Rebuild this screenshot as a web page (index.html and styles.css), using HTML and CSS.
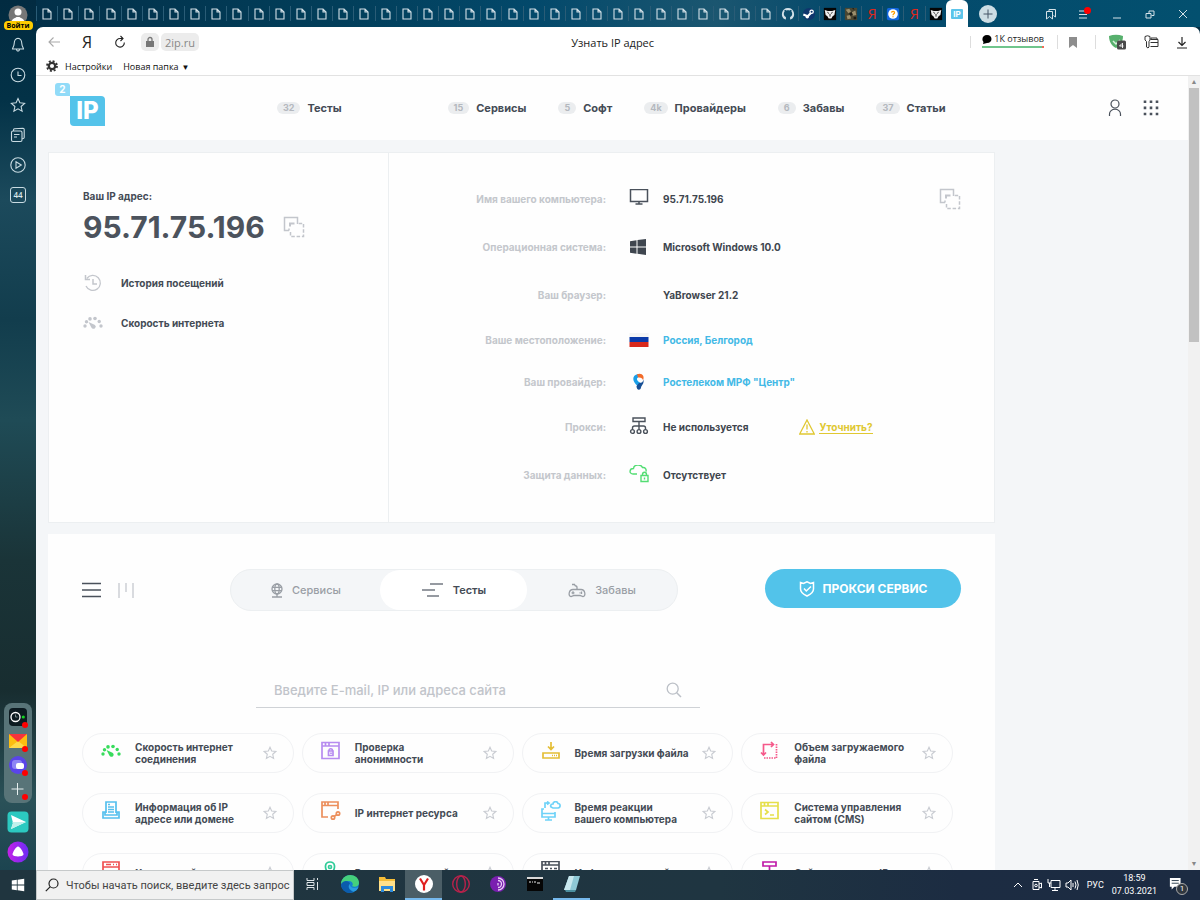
FILE: index.html
```html
<!DOCTYPE html>
<html lang="ru">
<head>
<meta charset="utf-8">
<title>Узнать IP адрес</title>
<link rel="stylesheet" href="styles.css">
</head>
<body>
<svg class="sprite" aria-hidden="true">
  <symbol id="doc" viewBox="0 0 10 12"><path d="M1 1h5l3 3v7H1zM6 1v3h3" fill="none" stroke="currentColor" stroke-width="1.1"/></symbol>
  <symbol id="github" viewBox="0 0 16 16"><path fill="currentColor" d="M8 1a7 7 0 0 0-3 13.300c.5.100.6-.2.600-.5v-2.300C4 10.800 3.200 9.500 3.200 7.500c0-1 .3-1.800.9-2.500-.2-.6-.2-1.400.1-2 .8 0 1.500.5 2 .9 1.200-.3 2.400-.3 3.600 0 .5-.4 1.200-.9 2-.9.3.600.3 1.400.1 2 .6.700.9 1.500.9 2.500 0 2-.8 3.300-2.400 4v2.300c0 .3.1.6.600.5A7 7 0 0 0 8 1z"/></symbol>
  <symbol id="steam" viewBox="0 0 16 16"><circle cx="8" cy="8" r="7" fill="#10356d"/><path d="M1.500 8.500l5 2 4-4" stroke="#fff" stroke-width="2.500" fill="none"/><circle cx="11" cy="5.500" r="2.600" fill="#fff"/><circle cx="11" cy="5.500" r="1.200" fill="#10356d"/><circle cx="6" cy="11" r="2" fill="#fff"/></symbol>
  <symbol id="wolf" viewBox="0 0 16 16"><path d="M1 1h14v14H1z" fill="#050505"/><path d="M2 3.500l3.500 1h5l3.500-1-1 5.500-2 1.500L9.500 13h-3L5 10.500 3 9z" fill="#eee"/><path d="M5 6l2 1.500M11 6L9 7.500M8 8v3" stroke="#111" stroke-width="1"/></symbol>
  <symbol id="camo" viewBox="0 0 16 16"><path d="M1 1h14v14H1z" fill="#4a4632"/><path d="M2 3l4-1 2 3-3 2zM9 6l4-2 1 5-4 1zM3 10l4-1 1 4-4 1z" fill="#9c8f6d"/><path d="M6 7l3-1 1 3-3 1zM11 11h3v3h-3zM9 2l2-1 1 2z" fill="#1c1b15"/></symbol>
  <symbol id="quest" viewBox="0 0 16 16"><rect x="1" y="1" width="14" height="14" rx="2" fill="#1266dd"/><circle cx="8" cy="8" r="5.500" fill="#fff"/><path d="M6.300 6.500C6.500 4.500 10 4.600 9.700 6.600 9.500 7.700 8 7.700 8 9.300M8 10.500v1.300" fill="none" stroke="#ff9d00" stroke-width="1.500"/></symbol>
  <symbol id="copy" viewBox="0 0 22 22"><path d="M6 14.500H1.500V1.500h13V6" fill="none" stroke="currentColor" stroke-width="1.500"/><path d="M7 10.500V7.500h4.500" fill="none" stroke="currentColor" stroke-width="2"/><path d="M14.500 6v2M6 14.500v-2" fill="none" stroke="currentColor" stroke-width="1.500"/><path d="M7.500 16v4.500h13v-13H15" fill="none" stroke="currentColor" stroke-width="1.500" stroke-dasharray="3.500 1.800"/></symbol>
  <symbol id="gauge" viewBox="0 0 20 14"><g fill="currentColor"><circle cx="2" cy="10" r="1.700"/><circle cx="3.500" cy="5.800" r="1.700"/><circle cx="7" cy="2.900" r="1.800"/><circle cx="12" cy="2.500" r="1.800"/><circle cx="16.200" cy="5.500" r="1.700"/><circle cx="18" cy="10" r="1.700"/><path d="M5.500 6l6 2.700a2.200 2.200 0 1 1-3 3z"/></g></symbol>
  <symbol id="star" viewBox="0 0 16 16"><path d="M8 1.500l1.900 4.300 4.700.5-3.500 3.200 1 4.700L8 11.800l-4.100 2.400 1-4.700L1.400 6.300l4.700-.5z" fill="none" stroke="currentColor" stroke-width="1.300"/></symbol>
  <symbol id="win" viewBox="0 0 18 18"><path d="M1 3.300l6.500-1v6.200H1zM8.500 2.100L17 1v7.500H8.500zM1 9.500h6.500v6.200l-6.500-1zM8.500 9.500H17V17l-8.500-1.200z" fill="currentColor"/></symbol>
</svg>

<div class="desktop">
  <div class="browser">
    <aside class="side">
      <button class="login" aria-label="Профиль">
        <svg width="20" height="20" viewBox="0 0 20 20"><circle cx="10" cy="10" r="9.500" fill="#777"/><circle cx="10" cy="7" r="3.500" fill="#fff"/><path d="M3.500 17c.5-4 4.500-4 5-5h3c.5 1 4.500 1 5 5z" fill="#fff"/></svg>
        <span class="login-text">Войти</span>
      </button>
      <button class="side-btn" aria-label="Уведомления"><svg viewBox="0 0 16 16"><path d="M8 1.200C5 1.500 4.300 4 4.200 6.500 4.100 9.500 2.500 10.500 2.500 12h11c0-1.500-1.600-2.500-1.700-5.500C11.700 4 11 1.500 8 1.200zM6.500 12.500c.2 2.200 2.800 2.200 3 0"/></svg></button>
      <button class="side-btn" aria-label="История"><svg viewBox="0 0 16 16"><circle cx="8" cy="8" r="6.800"/><path d="M8 4.500V8.500h3.500"/></svg></button>
      <button class="side-btn" aria-label="Избранное"><svg viewBox="0 0 16 16"><path d="M8 1.500l1.900 4.300 4.700.5-3.500 3.200 1 4.700L8 11.800l-4.100 2.400 1-4.700L1.400 6.300l4.700-.5z"/></svg></button>
      <button class="side-btn" aria-label="Коллекции"><svg viewBox="0 0 16 16"><rect x="1.500" y="4" width="10.500" height="10.500" rx="1.500"/><path d="M3.500 4V3q0-1 1-1.200L13 1.200q1.200 0 1.200 1.200v8q0 1.200-2 1.200M4 7.500h5.500M4 10h3"/></svg></button>
      <button class="side-btn" aria-label="Видео"><svg viewBox="0 0 16 16"><circle cx="8" cy="8" r="7.200"/><path d="M6 4.800v6.400L11.300 8z"/></svg></button>
      <button class="side-btn count">44</button>
      <div class="side-dock">
        <button class="dock-btn" aria-label="Эфир"><svg viewBox="0 0 18 18"><rect width="18" height="18" rx="4" fill="#0c1a20"/><circle cx="6.500" cy="9" r="4.500" fill="none" stroke="#fff" stroke-width="1.300"/><path d="M6.500 6.500v2.500h2" stroke="#788" fill="none"/><circle cx="14.300" cy="9" r="1.600" fill="#12d822"/></svg></button>
        <button class="dock-btn" aria-label="Почта"><svg viewBox="0 0 18 18"><path d="M0 2h18v14H0z" fill="#fdbd10"/><path d="M0 16l9-7 9 7z" fill="#ffd94a"/><path d="M0 2h18l-9 8z" fill="#f5333c"/></svg></button>
        <button class="dock-btn" aria-label="Мессенджер"><svg viewBox="0 0 18 18"><circle cx="9" cy="9" r="9" fill="#5a45e8"/><rect x="3" y="4" width="10" height="9" rx="3" fill="#8f85f5"/><rect x="7" y="7" width="8" height="6" rx="2" fill="#fff"/></svg></button>
        <button class="dock-btn" aria-label="Добавить"><svg viewBox="0 0 18 18"><path d="M8.500 3v12M2.500 9h12" stroke="#e6efef" stroke-width="1"/></svg></button>
      </div>
      <button class="side-app" aria-label="Отправить"><svg viewBox="0 0 22 22"><rect x="0.500" y="0.500" width="21" height="21" rx="4" fill="#2cc9c0"/><path d="M4 4l15 7-15 7 2-6z" fill="#fff"/><path d="M5 11h14L4 18l2-6z" fill="#bff0ec"/></svg></button>
      <button class="side-app" aria-label="Алиса"><svg viewBox="0 0 22 22"><defs><linearGradient id="alice" x2="1" y2="0"><stop stop-color="#c322e6"/><stop offset="1" stop-color="#6b2cf5"/></linearGradient></defs><circle cx="11" cy="11" r="10.500" fill="url(#alice)"/><path d="M11 5.500c2 0 5.500 6 5.500 8 0 2.600-11 2.600-11 0 0-2 3.500-8 5.500-8z" fill="#fff"/></svg></button>
    </aside>

    <div class="frame">
      <div class="tabbar">
        <div class="tabs" id="tabs"></div>
        <button class="tab-active"><span class="ip-mini">IP</span></button>
        <div class="window-tools">
          <button class="new-tab" aria-label="Новая вкладка"><svg width="18" height="18" viewBox="0 0 18 18"><circle cx="9" cy="9" r="9" fill="#cddde4"/><path d="M9 4.500v9M4.500 9h9" stroke="#456"/></svg></button>
          <div class="window-buttons">
            <button aria-label="Закладки"><svg viewBox="0 0 12 12"><path d="M4 3.500v-2h6.500V9L8.500 7.500M1.500 3.500h6V11L4.500 8.500 1.500 11z"/></svg></button>
            <button aria-label="Меню" class="has-dot"><svg viewBox="0 0 12 12"><path d="M1 3h6M1 6.500h8M1 10h8"/></svg></button>
            <button aria-label="Свернуть"><svg viewBox="0 0 12 12"><path d="M2 10h8"/></svg></button>
            <button aria-label="Окно"><svg viewBox="0 0 12 12"><path d="M2 5.500h5V10H2zM5 5V3h5v4.500H7.500"/></svg></button>
            <button aria-label="Закрыть"><svg viewBox="0 0 12 12"><path d="M2 2l8 8M10 2l-8 8"/></svg></button>
          </div>
        </div>
      </div>

      <div class="window">
        <div class="toolbar">
          <div class="nav-buttons">
            <button aria-label="Назад"><svg class="pale" viewBox="0 0 14 14"><path d="M13 7H2M6.500 2.500L2 7l4.500 4.500"/></svg></button>
            <button class="ya">Я</button>
            <button aria-label="Обновить"><svg viewBox="0 0 14 14"><path d="M11.300 7.500A4.300 4.300 0 1 1 7 3.500h3M7.500 1L10 3.500 7.500 6"/></svg></button>
          </div>
          <div class="address">
            <span class="lock"><svg width="10" height="12" viewBox="0 0 10 12"><path d="M1 5h8v6H1z" fill="#777"/><path d="M3 5V3.500a2 2 0 0 1 4 0V5" fill="none" stroke="#777" stroke-width="1.300"/></svg></span>
            <span class="host">2ip.ru</span>
          </div>
          <div class="page-title">Узнать IP адрес</div>
          <div class="toolbar-right">
            <a class="reviews" href="#"><svg width="10" height="9" viewBox="0 0 10 9"><path d="M5 0c6 0 6 8 0 8L1 9l.5-2C-1 4 1 0 5 0z" fill="#000"/></svg>1К отзывов</a>
            <button class="mark" aria-label="В закладки"><svg width="8" height="11" viewBox="0 0 8 11"><path d="M0 0h8v11L4 8l-4 3z" fill="#8d8d8d"/></svg></button>
            <button aria-label="Защита"><svg width="18" height="16" viewBox="0 0 18 16"><path d="M1 2q7-2.500 14 0c0 6-3 10-7 12C4 12 1 8 1 2z" fill="#57b06d"/><path d="M5 7l3 3 4-4" stroke="#d8f0dd" fill="none" stroke-width="1.500"/><rect x="9" y="6.500" width="9" height="9" rx="1.500" fill="#4a4a4a"/><path d="M14.500 9v5M14 9.500L11.500 12H15.500" stroke="#fff" stroke-width=".9" fill="none"/></svg></button>
            <button aria-label="Пароли"><svg width="15" height="14" viewBox="0 0 15 14"><path d="M1 1.500Q3.500 0 6 1.500V5L5 6.500V12L4 13 2.500 12V6.500L1 5zM7 4.500V3h6v1.500M6.500 4.500H14V11.500H6.500M6.500 7.500H14" fill="none" stroke="#333"/></svg></button>
            <button aria-label="Загрузки"><svg width="10" height="13" viewBox="0 0 10 13"><path d="M5 1v8.500M1.500 6L5 9.500 8.500 6M0 12h10" fill="none" stroke="#222" stroke-width="1.200"/></svg></button>
          </div>
        </div>
        <div class="bookmarks">
          <a href="#"><svg width="12" height="12" viewBox="0 0 12 12"><circle cx="6" cy="6" r="3.200" fill="none" stroke="#333" stroke-width="2.300"/><circle cx="6" cy="6" r="5" fill="none" stroke="#333" stroke-width="1.800" stroke-dasharray="2 1.930"/></svg>Настройки</a>
          <a href="#">Новая папка <span class="caret">▼</span></a>
        </div>

        <div class="viewport">
          <div class="page">
            <header class="site-header">
              <a class="logo" href="#" aria-label="2IP"><span class="logo-two">2</span><span class="logo-ip">IP</span></a>
              <nav class="site-nav">
                <a href="#"><span class="pill">32</span>Тесты</a>
                <a href="#"><span class="pill">15</span>Сервисы</a>
                <a href="#"><span class="pill">5</span>Софт</a>
                <a href="#"><span class="pill">4k</span>Провайдеры</a>
                <a href="#"><span class="pill">6</span>Забавы</a>
                <a href="#"><span class="pill">37</span>Статьи</a>
              </nav>
              <div class="header-actions">
                <button aria-label="Войти"><svg width="14" height="18" viewBox="0 0 14 18"><circle cx="7" cy="5" r="4"/><path d="M1.500 17v-2a5.500 4.800 0 0 1 11 0v2"/></svg></button>
                <button aria-label="Разделы"><svg class="dots" width="16" height="16" viewBox="0 0 16 16"><path d="M2 .5v15M8 .5v15M14 .5v15"/></svg></button>
              </div>
            </header>

            <main class="content">
              <section class="ip-card">
                <div class="ip-left">
                  <p class="ip-label">Ваш IP адрес:</p>
                  <div class="ip-row"><span class="ip-value">95.71.75.196</span><button class="copy" aria-label="Копировать"><svg><use href="#copy"/></svg></button></div>
                  <a class="ip-link" href="#"><svg viewBox="0 0 20 20"><path d="M3.800 5.500A7.500 7.500 0 1 1 3 13" fill="none" stroke="currentColor" stroke-width="1.300"/><path d="M2.500 2v4.500H7M10 6v5h4" fill="none" stroke="currentColor" stroke-width="1.500"/></svg>История посещений</a>
                  <a class="ip-link" href="#"><svg><use href="#gauge"/></svg>Скорость интернета</a>
                </div>
                <div class="ip-right">
                  <dl class="facts">
                    <div class="fact"><dt>Имя вашего компьютера:</dt><dd><svg viewBox="0 0 20 20"><path d="M1.500.500h17v12h-17zM10 13v2M6.500 15h7" fill="none" stroke="#4a515b" stroke-width="1.500"/></svg>95.71.75.196</dd></div>
                    <div class="fact"><dt>Операционная система:</dt><dd><svg class="dark"><use href="#win"/></svg>Microsoft Windows 10.0</dd></div>
                    <div class="fact"><dt>Ваш браузер:</dt><dd><span></span>YaBrowser 21.2</dd></div>
                    <div class="fact short"><dt>Ваше местоположение:</dt><dd><svg viewBox="0 0 20 20"><path d="M.5 3h19v5H.5z" fill="#f5f5f5"/><path d="M.5 7h19v5H.5z" fill="#0b3aa8"/><path d="M.5 12h19v5H.5z" fill="#d8291c"/></svg><a href="#">Россия, Белгород</a></dd></div>
                    <div class="fact short"><dt>Ваш провайдер:</dt><dd><svg viewBox="0 0 20 20"><path d="M9 14C3 10 2.500 3 9 2v3.500C7 6.500 8 9 11 10.500L13 13l-3 3z" fill="#1a9fe8"/><path d="M8 2.200c5-2 8 2 6 6-.5-2-2-3-5-2.700z" fill="#f26b2a"/><path d="M10 11c3 0 4-1 4.500-3.500.5 4-1 5-2 6.500l-1 3c-2 2-4 0-4-3z" fill="#174f95"/></svg><a href="#">Ростелеком МРФ "Центр"</a></dd></div>
                    <div class="fact"><dt>Прокси:</dt><dd><svg viewBox="0 0 20 20"><g fill="none" stroke="#4a515b" stroke-width="1.400"><path d="M4 1h12v3.500H4zM10 4.500v8M3.500 12.500V11q0-2 2-2h9q2 0 2 2v1.500"/><circle cx="3.500" cy="14.500" r="1.900"/><circle cx="10" cy="14.500" r="1.900"/><circle cx="16.500" cy="14.500" r="1.900"/></g></svg>Не используется<a class="warn" href="#"><svg viewBox="0 0 16 16"><path d="M8 1L15.300 15H.7zM8 5.500v5M8 12v1.500" fill="none" stroke="currentColor" stroke-width="1.300"/></svg><span>Уточнить?</span></a></dd></div>
                    <div class="fact"><dt>Защита данных:</dt><dd><svg viewBox="0 0 20 20"><g fill="none" stroke="#53dd73" stroke-width="1.400"><path d="M8 9H4C0 9 0 3.500 4.500 3.500 5-1 12-1 13.500 2.500c3-.5 4 2 3.500 4M13.500 10.500V9.500c0-3 4-3 4 0v1M12 10.500h7v6h-7zM15.500 12.500v2"/></g></svg>Отсутствует</dd></div>
                  </dl>
                  <button class="copy" aria-label="Копировать"><svg><use href="#copy"/></svg></button>
                </div>
              </section>

              <section class="tools">
                <div class="tools-top">
                  <div class="view-modes">
                    <button aria-label="Список"><svg width="20" height="16" viewBox="0 0 20 16"><path d="M0 1.500h19M0 8h19M0 14.500h19" stroke="#4a515b" stroke-width="1.500"/></svg></button>
                    <button aria-label="Колонки"><svg width="16" height="16" viewBox="0 0 16 16"><path d="M1 1v15M8 1v9M15 1v15" stroke="#c5c8ce" stroke-width="1.300"/></svg></button>
                  </div>
                  <div class="segments">
                    <button><svg width="12" height="15" viewBox="0 0 12 15"><g fill="none" stroke="currentColor" stroke-width="1.300"><circle cx="6" cy="6" r="5"/><ellipse cx="6" cy="6" rx="2.200" ry="5"/><path d="M1 4.300h10M1 7.700h10M6 11v3M1 14h10"/></g></svg>Сервисы</button>
                    <button class="on"><svg width="22" height="16" viewBox="0 0 22 16"><path d="M8 2h13M0 8h13M5 14h12" stroke="#747a82" stroke-width="1.600"/></svg>Тесты</button>
                    <button><svg width="18" height="15" viewBox="0 0 18 15"><g fill="none" stroke="currentColor" stroke-width="1.300"><path d="M9 7V4.500Q9 3 8 3T6.500 1.500H4M5 6.500h8c4.500 0 5 7 2 7-1.500 0-1.500-1-3-1H6c-1.500 0-1.500 1-3 1-3 0-2.500-7 2-7zM5 8.300v3M3.500 9.800h3M11.500 9.800h1M13.500 8.500v2.500"/></g></svg>Забавы</button>
                  </div>
                  <button class="proxy"><svg width="16" height="16" viewBox="0 0 16 16"><path d="M1.500 1.500l3 1L8 .8l3.500 1.700 3-1V8c0 4-3.500 5.500-6.500 7C5 13.500 1.500 12 1.500 8zM5 7.500L7.300 10 12 5.500" fill="none" stroke="#fff" stroke-width="1.500"/></svg>ПРОКСИ СЕРВИС</button>
                </div>
                <form class="search">
                  <input type="search" placeholder="Введите E-mail, IP или адреса сайта" aria-label="Введите E-mail, IP или адреса сайта">
                  <button type="button" aria-label="Найти"><svg width="16" height="16" viewBox="0 0 16 16"><circle cx="6.700" cy="6.700" r="5.500" fill="none" stroke="#bcc0c7" stroke-width="1.300"/><path d="M10.700 10.700L15 15" stroke="#bcc0c7" stroke-width="1.500"/></svg></button>
                </form>
                <div class="grid">
                  <a class="tool c-green" href="#"><svg viewBox="0 0 20 14"><use href="#gauge"/></svg><span>Скорость интернет<br>соединения</span><svg class="fav"><use href="#star"/></svg></a>
                  <a class="tool c-purple" href="#"><svg viewBox="0 0 20 20"><path d="M1 1.500h17v16H1zM1 5h17M4.500 1.500V5M8 1.500V5M7.500 10h4.500v4.500H7.500zM8 10c0-3 3.500-3 3.500 0M10 11.500v1.500"/></svg><span>Проверка<br>анонимности</span><svg class="fav"><use href="#star"/></svg></a>
                  <a class="tool c-gold" href="#"><svg viewBox="0 0 20 20"><path d="M10 1v7M7 5.500l3 3 3-3M2 12h16v5H2zM11 14.500h1M13 14.500h1M15 14.500h1"/></svg><span>Время загрузки файла</span><svg class="fav"><use href="#star"/></svg></a>
                  <a class="tool c-pink" href="#"><svg viewBox="0 0 20 20"><path d="M3.500 14V3.500H13M1 11.500l2.500 2.500L6 11.500M11 1l2.500 2.500L11 6"/><path d="M16.500 3v14H3" stroke-dasharray="1.500 1"/></svg><span>Объем загружаемого<br>файла</span><svg class="fav"><use href="#star"/></svg></a>
                  <a class="tool c-blue" href="#"><svg viewBox="0 0 20 20"><path d="M5 12V1h10v11M7 3.500h2M7 6h6M7 8.500h6M7 11h6M2 11h2v3h12v-3h2v6H2z"/></svg><span>Информация об IP<br>адресе или домене</span><svg class="fav"><use href="#star"/></svg></a>
                  <a class="tool c-orange" href="#"><svg viewBox="0 0 20 20"><path d="M7 16H1V1h16v7M1 4.500h16M4 1v3M7 1v3M13 15.500l3-2"/><circle cx="12" cy="16.500" r="1.700"/><circle cx="17" cy="12.500" r="1.700"/></svg><span>IP интернет ресурса</span><svg class="fav"><use href="#star"/></svg></a>
                  <a class="tool c-sky" href="#"><svg viewBox="0 0 20 20"><path d="M3 8H1v8h13v-5M1 12.500h13M7.500 16v3M4 19h7M4 7V2h4M6 .5L8 2 6 3.500M12 7h5c3-.5 2.500-4.500 0-4.500-1-3-5-2-5 .5-3 0-3 3-1 3.500z"/></svg><span>Время реакции<br>вашего компьютера</span><svg class="fav"><use href="#star"/></svg></a>
                  <a class="tool c-lime" href="#"><svg viewBox="0 0 20 20"><path d="M1 1.500h17v16H1zM1 5h17M4.500 1.500V5M8 1.500V5M5 8.500L8 11l-3 2.500M10 14h4"/></svg><span>Система управления<br>сайтом (CMS)</span><svg class="fav"><use href="#star"/></svg></a>
                  <a class="tool c-red" href="#"><svg viewBox="0 0 20 20"><path d="M2 1h16v5H2zM2 6v5h16V6M2 11v5h16v-5M5 3.500h5M12 3.500h1M15 3.500h1"/></svg><span>Хостинг сайта</span><svg class="fav"><use href="#star"/></svg></a>
                  <a class="tool c-teal" href="#"><svg viewBox="0 0 20 20"><path d="M9 14C2 7 4 1 9 1s7 6 0 13zM2 15h4l3 3 3-3h5"/><circle cx="9" cy="6" r="1.500"/></svg><span>Расстояние до сайта</span><svg class="fav"><use href="#star"/></svg></a>
                  <a class="tool c-dark" href="#"><svg viewBox="0 0 20 20"><path d="M1 .5h17v16H1zM1 4h17M4.500.5V4M8 .5V4M4 7.500h3M9 7.500h2M13 7.500h3M4 11h11"/></svg><span>Информация о сайте</span><svg class="fav"><use href="#star"/></svg></a>
                  <a class="tool c-magenta" href="#"><svg viewBox="0 0 20 20"><path d="M3 1h13v4H3zM9.500 5v8M3 15v-5h13v5"/></svg><span>Сайты на одном IP</span><svg class="fav"><use href="#star"/></svg></a>
                </div>
              </section>
            </main>
          </div>
          <div class="scrollbar" aria-hidden="true"><span>▲</span><i></i><span>▼</span></div>
        </div>
      </div>
    </div>
  </div>

  <footer class="taskbar">
    <button class="start" aria-label="Пуск"><svg width="14" height="14"><use href="#win"/></svg></button>
    <label class="task-search"><svg width="14" height="14" viewBox="0 0 14 14"><circle cx="8.500" cy="5.500" r="4.500" fill="none" stroke="#222" stroke-width="1.200"/><path d="M5.300 8.700L.8 13.200" stroke="#222" stroke-width="1.200"/></svg><input type="text" placeholder="Чтобы начать поиск, введите здесь запрос" aria-label="Поиск"></label>
    <div class="task-apps">
      <button aria-label="Задачи"><svg viewBox="0 0 20 20"><path d="M4 4v2.500h7V4M4 16v-2.500h7V16M4 8.500h7v3H4zM14.500 4v2M14.500 8v8" fill="none" stroke="#dfe5e8"/></svg></button>
      <button aria-label="Edge"><svg viewBox="0 0 20 20"><circle cx="10" cy="10" r="9" fill="#1580d0"/><path d="M2 6C6-2 19 0 19 9c0 3-4 5-7 3 2-2 0-5-3-5C5 7 3 9 1 11c0-2 0-3 1-5z" fill="#45d07c"/><path d="M1 10c3-5 9-3 9 0-3 2-1 6 3 8C7 21 1 16 1 10z" fill="#0b5cad"/><path d="M10 10c-.5 4 5 5 8.500 3-1 3-3 4-5 4.500-4-1.500-6-4.500-3.500-7.500z" fill="#2b9be0"/></svg></button>
      <button aria-label="Проводник"><svg viewBox="0 0 20 20"><path d="M2 3h6l1 2h9v12H2z" fill="#f5bd38"/><path d="M2 7h16v10H2z" fill="#ffe08a"/><path d="M4 12h12v6h-3v-3H7v3H4z" fill="#2d8bdc"/></svg></button>
      <button class="current" aria-label="Яндекс"><svg viewBox="0 0 20 20"><circle cx="10" cy="10" r="9" fill="#fff"/><path d="M6 4.500l4 6.500 4-6.500M10 10v6.500" fill="none" stroke="#e02020" stroke-width="2.200"/></svg></button>
      <button aria-label="Opera"><svg viewBox="0 0 20 20"><circle cx="10" cy="10" r="8.300" fill="none" stroke="#b8224b" stroke-width="1.400"/><ellipse cx="10" cy="10" rx="4.300" ry="8" fill="none" stroke="#b8224b" stroke-width="1.400"/></svg></button>
      <button aria-label="Tor"><svg viewBox="0 0 20 20"><circle cx="10" cy="10" r="8" fill="#7a1fb0"/><path d="M10 4a6 6 0 0 1 0 12M10 6.500a3.500 3.500 0 0 1 0 7M10 9v2.500" fill="none" stroke="#e8cff5" stroke-width="1.300"/></svg></button>
      <button aria-label="Консоль"><svg viewBox="0 0 20 20"><path d="M2 3h16v14H2z" fill="#050505"/><path d="M2 3h16v2H2z" fill="#d8d8d8"/><path d="M4 8h2M7 8h1M9 8h2M12 9h3" stroke="#eee"/></svg></button>
      <button class="open" aria-label="Блокнот"><svg viewBox="0 0 20 20"><path d="M7 2h11l-4 14H2z" fill="#8fc9d6"/><path d="M7 2h5L8 16H2z" fill="#c9e8ee"/><path d="M3 16l11 0-1 2H4z" fill="#4c8fa0"/></svg></button>
    </div>
    <div class="tray">
      <button aria-label="Скрытые значки"><svg viewBox="0 0 14 14"><path d="M3 9l4-4 4 4"/></svg></button>
      <button aria-label="Камера"><svg viewBox="0 0 14 14"><path d="M4 3.500h6v8H4zM5 1.500h4M10 6l2.500-1v5L10 9"/><circle cx="7" cy="7.500" r="1.300"/></svg></button>
      <button aria-label="Сеть"><svg viewBox="0 0 14 14"><path d="M4 2.500h9v7H4zM8 9.500v3M5 12.500h6M1 1v4h3M2.500 5v4"/></svg></button>
      <button aria-label="Звук"><svg viewBox="0 0 14 14"><path d="M1 5h2l3-3v10L3 9H1zM8 5v4M10 3.500q2 3.500 0 7M12 2q2.500 5 0 10"/></svg></button>
      <span class="lang">РУС</span>
      <time class="clock"><span>18:59</span><span>07.03.2021</span></time>
      <button class="notes" aria-label="Уведомления"><svg viewBox="0 0 18 18"><path d="M1 1h12v10H6l-3 3v-3H1z" fill="#fff"/><path d="M3 4h8M3 7h8" stroke="#1d3040"/></svg><span>1</span></button>
    </div>
  </footer>
</div>
<script src="app.js"></script>
</body>
</html>
```
FILE: styles.css
```css
* { box-sizing: border-box; }
body { margin: 0; font-family: "Open Sans", "Noto Sans", sans-serif; font-size: 11px; color: #222; }
button { border: 0; padding: 0; background: none; color: inherit; font: inherit; display: flex; align-items: center; justify-content: center; }
a { color: inherit; text-decoration: none; }
p, dl, dd { margin: 0; }
input { border: 0; padding: 0; background: none; outline: 0; font: inherit; min-width: 0; }
svg { flex: none; display: block; }
.sprite { position: absolute; width: 0; height: 0; }

.desktop { height: 100vh; display: flex; flex-direction: column; overflow: hidden; }
.browser { flex: 1; min-height: 0; display: flex; background: linear-gradient(180deg, #022b41 0, #033247 100px, #1c4a5c 200px, #123d4d 320px, #1f4b56 420px, #1a3438 560px, #182d30 690px, #2a5158 800px, #1c4450 870px); }

/* Sidebar */
.side { width: 36px; flex: none; display: flex; flex-direction: column; align-items: center; padding: 4px 0 7px; }
.login { flex-direction: column; height: 26px; }
.login-text { background: #ffcc00; color: #000; font-size: 7px; line-height: 9px; font-weight: 700; border-radius: 4px; padding: 0 3px; margin-top: -4px; z-index: 1; }
.side-btn { width: 30px; height: 30px; }
.side-btn svg { width: 16px; height: 16px; fill: none; stroke: #c9dbe2; stroke-width: 1.1; }
.count { width: 16px; height: 16px; margin: 7px 0; border: 1px solid #c9dbe2; border-radius: 3px; color: #dbe8ec; font-size: 8px; line-height: 14px; font-weight: 600; }
.side-dock { margin-top: auto; width: 28px; height: 100px; padding: 2px 0; border-radius: 8px; background: #587478; display: flex; flex-direction: column; align-items: center; }
.dock-btn { position: relative; width: 18px; height: 24px; }
.dock-btn svg { width: 18px; height: 18px; }
.dock-btn::after { content: ""; position: absolute; right: -1px; bottom: 1px; width: 6px; height: 6px; border-radius: 50%; background: #f00; }
.side-app { margin-top: 8px; height: 22px; }
.side-app svg { width: 22px; height: 22px; }

/* Tabs */
.frame { flex: 1; min-width: 0; display: flex; flex-direction: column; }
.tabbar { height: 27px; display: flex; background: linear-gradient(90deg, #023049, #023e5a 300px, #03496b 500px, #1b5670 680px, #04496b 800px, #03506f); }
.tabs { flex: 1; min-width: 0; display: flex; align-items: center; }
.tab { flex: 1; min-width: 0; height: 15px; border-left: 1px solid #2a5c76; color: #d3e0e7; }
.tab svg { width: 14px; height: 14px; }
.tab .doc { width: 10px; height: 12px; }
.tab-ya { color: #e0281b; font-size: 14px; line-height: 14px; }
.tab-active { width: 22px; background: #fff; border-radius: 6px 6px 0 0; }
.ip-mini { background: #5cc4ea; color: #fff; font: 700 8px/10px Inter, sans-serif; padding: 0 2px; border-radius: 1px; }
.window-tools { width: 232px; display: flex; align-items: center; justify-content: space-between; padding: 0 11px; }
.window-buttons { display: flex; gap: 21px; }
.window-buttons button { position: relative; }
.window-buttons svg { width: 12px; height: 12px; fill: none; stroke: #d5e2e8; }
.has-dot::after { content: ""; position: absolute; right: -1px; top: -1px; width: 7px; height: 7px; border-radius: 50%; background: #f00; }

/* Toolbar */
.window { flex: 1; min-height: 0; display: flex; flex-direction: column; background: #fff; border-radius: 7px 7px 0 0; overflow: hidden; }
.toolbar { height: 30px; display: flex; align-items: center; padding: 0 13px 0 11px; }
.nav-buttons { display: flex; gap: 19px; width: 94px; }
.nav-buttons svg { width: 14px; height: 14px; fill: none; stroke: #222; stroke-width: 1.1; }
.nav-buttons .pale { stroke: #aaa; }
.ya { width: 14px; font-size: 16px; line-height: 18px; }
.address { display: flex; gap: 2px; }
.lock, .host { background: #ececec; border-radius: 5px; height: 18px; display: flex; align-items: center; }
.lock { width: 18px; justify-content: center; }
.host { padding: 0 4px; color: #888; font-size: 11px; }
.page-title { flex: 1; text-align: center; font-size: 11px; padding-left: 44px; }
.toolbar-right { display: flex; align-items: center; gap: 18px; }
.toolbar-right button { height: 14px; }
.reviews { position: relative; display: flex; align-items: center; gap: 2px; font-size: 10px; line-height: 12px; margin: 0 6px 6px 0; font-size: 9px; }
.reviews::before { content: ""; position: absolute; left: -12px; top: 3px; width: 1px; height: 12px; background: #ddd; }
.reviews::after { content: ""; position: absolute; left: 0; right: 0; bottom: -3px; height: 2px; background: linear-gradient(90deg, #70c58c 96%, #f26a55 96%); }
.toolbar-right .mark { width: 39px; padding-right: 8px; border: solid #ddd; border-width: 0 1px; margin-left: -11px; }
.toolbar-right .mark + button { margin-left: -6px; }
.bookmarks { height: 19px; border-bottom: 1px solid #e2e2e2; display: flex; align-items: center; gap: 11px; padding: 0 10px; font-size: 9px; color: #111; }
.bookmarks a { display: flex; align-items: center; gap: 7px; }
.bookmarks a + a { gap: 3px; }
.caret { font-size: 8px; }

/* Site */
.viewport { flex: 1; min-height: 0; display: flex; }
.page { flex: 1; min-width: 0; overflow: hidden; background: #f4f6f8; font-family: Inter, sans-serif; font-weight: 700; font-size: 10px; color: #444b55; }
.scrollbar { width: 12px; background: #f1f1f1; display: flex; flex-direction: column; align-items: center; padding: 0 1px; font-size: 7px; line-height: 12px; color: #888; }
.scrollbar i { width: 100%; height: 254px; background: #c1c1c1; margin-bottom: auto; }
.site-header { height: 64px; background: #fefefe; display: flex; align-items: center; padding: 0 29px 0 19px; }
.logo { width: 50px; height: 50px; display: flex; flex-direction: column; align-self: flex-start; padding-top: 7px; color: #fff; }
.logo-two { width: 15px; height: 13px; background: #91dbf8; border-radius: 3px 3px 0 3px; font-size: 10px; line-height: 13px; text-align: center; flex: none; }
.logo-ip { width: 35px; height: 30px; margin-left: 15px; background: #54c3ea; border-radius: 0 4px 0 4px; font-size: 24px; line-height: 30px; font-weight: 800; text-align: center; flex: none; }
.site-nav { flex: 1; display: flex; gap: 32px; margin-left: 172px; font-size: 11px; }
.site-nav a { display: flex; align-items: center; gap: 7px; }
.site-nav a:first-child { margin-right: 74px; }
.pill { background: #ebedef; color: #b4b8be; border-radius: 6px; font-size: 9px; line-height: 12px; padding: 0 6px; }
.header-actions { display: flex; gap: 21px; }
.header-actions svg { fill: none; stroke: #4a515b; stroke-width: 1.2; }
.header-actions .dots { stroke-width: 2.6; stroke-dasharray: 2.6 3.500; }

.content { width: 947px; max-width: 100%; margin: 12px 0 0 12px; display: flex; flex-direction: column; gap: 11px; }
.ip-card { display: flex; background: #fefefe; border: 1px solid #eceff1; }
.ip-left { flex: 0 0 340px; padding: 35px 34px; border-right: 1px solid #eceff1; }
.ip-label { line-height: 16px; }
.ip-row { display: flex; align-items: center; gap: 18px; height: 46px; margin-bottom: 13px; }
.ip-value { font-size: 30px; line-height: 36px; color: #4c535d; }
.copy { color: #c3c6cc; }
.copy svg { width: 22px; height: 22px; }
.ip-link { display: flex; align-items: center; gap: 18px; height: 40px; }
.ip-link svg { width: 20px; height: 20px; color: #c3c6cc; }
.ip-right { flex: 1; display: flex; align-items: flex-start; padding: 22px 33px 23px 0; }
.ip-right .copy { margin-top: 13px; }
.facts { flex: 1; }
.fact { display: grid; grid-template-columns: 217px 1fr; gap: 23px; align-items: center; height: 48px; }
.short { height: 42px; }
.fact dt { text-align: right; color: #c4c7cc; }
.fact dd { display: grid; grid-template-columns: 20px auto 1fr; column-gap: 14px; align-items: center; color: #3f464f; }
.fact dd > svg { width: 20px; height: 20px; }
.fact dd > .dark { width: 18px; height: 18px; }
.fact dd > a { color: #43b9e6; }
.fact dd > .warn { color: #e0c832; display: flex; align-items: center; gap: 4px; margin-left: 37px; }
.warn svg { width: 16px; height: 16px; }
.warn span { border-bottom: 1px solid; }

.tools { background: #fefefe; padding: 35px 34px 20px 34px; }
.tools-top { display: flex; align-items: flex-start; justify-content: space-between; }
.view-modes { display: flex; gap: 16px; height: 42px; width: 52px; }
.segments { flex: 0 1 448px; margin-left: 8px; height: 42px; border: 1px solid #eceff1; border-radius: 21px; background: #f4f6f8; display: grid; grid-template-columns: 149px 147px 149px; font-weight: 500; color: #999ea5; }
.segments button { gap: 9px; border-radius: 20px; font-size: 11px; padding-left: 2px; }
.segments .on { background: #fff; color: #444b55; font-weight: 600; }
.proxy { width: 196px; height: 39px; border-radius: 20px; background: #52c3ea; color: #fff; gap: 8px; font-size: 12px; }
.search { width: 444px; margin: 62px auto 25px 174px; height: 35px; border-bottom: 1px solid #cfd2d6; display: flex; align-items: center; padding: 0 18px; }
.search input { flex: 1; font-size: 13px; font-weight: 500; }
.search input::placeholder { color: #c1c4ca; opacity: 1; }
.grid { display: grid; grid-template-columns: repeat(4, 1fr); gap: 20px 8px; margin-right: 8px; line-height: 12px; }
.tool { height: 40px; border: 1px solid #f1f2f4; border-radius: 20px; display: flex; align-items: center; padding: 0 16px 0 18px; white-space: nowrap; }
.tool > svg:first-child { width: 20px; height: 20px; margin-right: 14px; margin-bottom: 4px; fill: none; stroke: currentColor; stroke-width: 1.7; }
.tool span { flex: 1; color: #444b55; }
.tool .fav { width: 14px; height: 14px; color: #c9ccd2; }
.tool.c-green > svg:first-child { stroke: none; }
.c-green { color: #37dc5c; }
.c-purple { color: #b78cf0; }
.c-gold { color: #e4be36; }
.c-pink { color: #f5598a; }
.c-blue { color: #55c0ee; }
.c-orange { color: #ec8f5c; }
.c-sky { color: #6ed2f8; }
.c-lime { color: #e6df4a; }
.c-red { color: #f05052; }
.c-teal { color: #2fcb98; }
.c-dark { color: #4a515b; }
.c-magenta { color: #c01aa8; }

/* Taskbar */
.taskbar { height: 30px; flex: none; display: flex; background: linear-gradient(90deg, #20353f, #1f3541 60%, #1c2c42 80%, #1c2b42); color: #fff; }
.start { width: 36px; }
.task-search { width: 258px; background: #f1f1f1; border: 1px solid #c6c9ca; display: flex; align-items: center; gap: 7px; padding: 0 0 0 8px; }
.task-search input { flex: 1; font-family: Roboto, sans-serif; font-size: 11px; }
.task-search input::placeholder { color: #444; opacity: 1; }
.task-apps { flex: 1; display: flex; }
.task-apps button { width: 37px; border-bottom: 2px solid transparent; }
.task-apps svg { width: 20px; height: 20px; }
.task-apps .current { background: #4b5e66; border-color: #76b9ed; }
.task-apps .open { border-color: #76b9ed; }
.tray { display: flex; align-items: center; gap: 4px; padding-right: 15px; font-family: Roboto, sans-serif; font-size: 9px; }
.tray > button svg { width: 14px; height: 14px; fill: none; stroke: #fff; }
.lang { margin-left: 4px; }
.clock { display: flex; flex-direction: column; align-items: center; line-height: 13px; font-size: 9px; margin: 0 8px 0 4px; }
.notes { position: relative; }
.tray .notes svg { width: 16px; height: 16px; stroke: none; }
.notes span { position: absolute; left: 7px; top: 6px; width: 12px; height: 12px; border-radius: 50%; border: 1px solid #aaa; background: #30373f; font-size: 8px; line-height: 10px; }
```
FILE: app.js
```js
const strip = document.getElementById('tabs');
const sites = ['github', 'steam', 'wolf', 'camo', 'ya', 'quest', 'ya', 'wolf'];
const tabs = Array(35).fill('doc').concat(sites);

strip.innerHTML = tabs.map((icon) => icon === 'ya'
  ? '<button class="tab tab-ya">Я</button>'
  : `<button class="tab" aria-label="Вкладка"><svg class="${icon}"><use href="#${icon}"/></svg></button>`
).join('');
```
